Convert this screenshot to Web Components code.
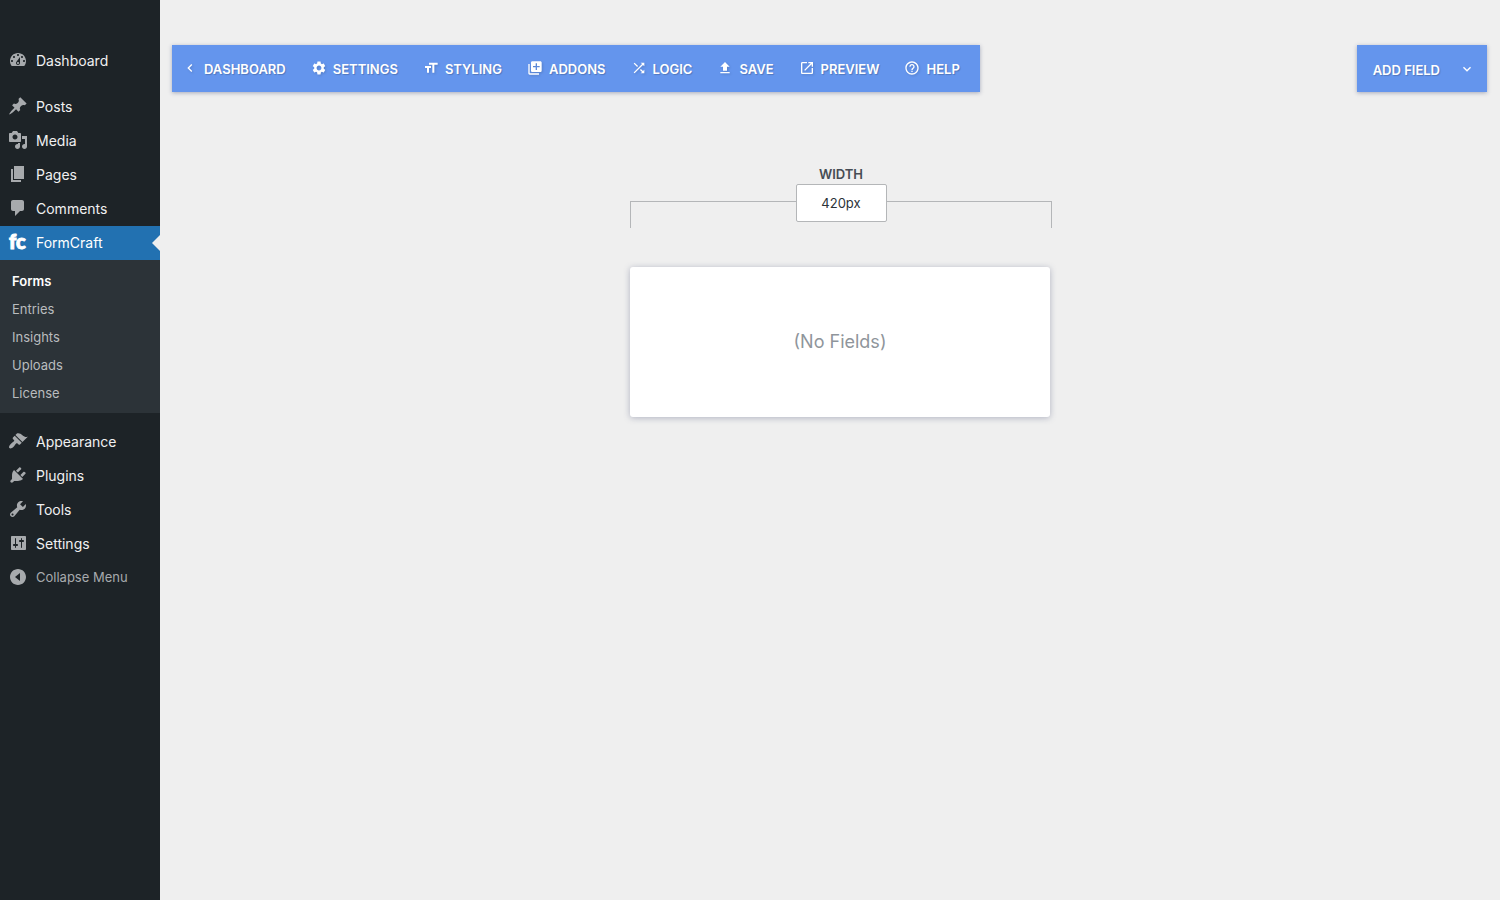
<!DOCTYPE html>
<html lang="en">
<head>
<meta charset="utf-8">
<meta name="viewport" content="width=device-width, initial-scale=1">
<title>FormCraft</title>
<style>
  html, body { height: 100%; }
  body {
    margin: 0;
    background: #efefef;
    font-family: Inter, "Liberation Sans", sans-serif;
    font-size: 14px;
  }
</style>
</head>
<body>
<builder-app>
  <admin-menu slot="menu">
    <menu-item icon="dashboard">Dashboard</menu-item>
    <menu-item icon="post" spaced>Posts</menu-item>
    <menu-item icon="media">Media</menu-item>
    <menu-item icon="page">Pages</menu-item>
    <menu-item icon="comments">Comments</menu-item>
    <menu-item icon="formcraft" current>FormCraft</menu-item>
    <sub-menu>
      <sub-item current>Forms</sub-item>
      <sub-item>Entries</sub-item>
      <sub-item>Insights</sub-item>
      <sub-item>Uploads</sub-item>
      <sub-item>License</sub-item>
    </sub-menu>
    <menu-item icon="appearance" spaced>Appearance</menu-item>
    <menu-item icon="plugins">Plugins</menu-item>
    <menu-item icon="tools">Tools</menu-item>
    <menu-item icon="sliders">Settings</menu-item>
    <menu-item icon="collapse" muted>Collapse Menu</menu-item>
  </admin-menu>
  <form-toolbar slot="toolbar">
    <tool-button icon="chevron-left" href="#dashboard">DASHBOARD</tool-button>
    <tool-button icon="settings">SETTINGS</tool-button>
    <tool-button icon="styling">STYLING</tool-button>
    <tool-button icon="addons">ADDONS</tool-button>
    <tool-button icon="logic">LOGIC</tool-button>
    <tool-button icon="save">SAVE</tool-button>
    <tool-button icon="preview" href="#preview">PREVIEW</tool-button>
    <tool-button icon="help">HELP</tool-button>
  </form-toolbar>
  <add-field slot="toolbar">ADD FIELD</add-field>
  <width-ruler value="420px">WIDTH</width-ruler>
  <form-card>(No Fields)</form-card>
</builder-app>

<script>
/* Admin icons are drawn on a 20 unit grid, toolbar icons on 24 */
const ICONS = {
  dashboard: [20, "M3.76 16h12.48c1.1-1.37 1.76-3.11 1.76-5 0-4.42-3.58-8-8-8s-8 3.58-8 8c0 1.89.66 3.63 1.76 5zM10 4c.55 0 1 .45 1 1s-.45 1-1 1-1-.45-1-1 .45-1 1-1zM6 6c.55 0 1 .45 1 1s-.45 1-1 1-1-.45-1-1 .45-1 1-1zm8 0c.55 0 1 .45 1 1s-.45 1-1 1-1-.45-1-1 .45-1 1-1zm-5.37 5.55L12 7v6c0 1.1-.9 2-2 2s-2-.9-2-2c0-.57.24-1.08.63-1.45zM4 10c.55 0 1 .45 1 1s-.45 1-1 1-1-.45-1-1 .45-1 1-1zm12 0c.55 0 1 .45 1 1s-.45 1-1 1-1-.45-1-1 .45-1 1-1zm-5 3c0-.55-.45-1-1-1s-1 .45-1 1 .45 1 1 1 1-.45 1-1z"],
  post: [20, "M10.44 3.02l1.82-1.82 6.36 6.35-1.83 1.82c-1.05-.68-2.48-.57-3.41.36l-.75.75c-.92.93-1.04 2.35-.35 3.41l-1.83 1.82-2.41-2.41-2.8 2.79c-.42.42-3.38 2.71-3.8 2.29s1.86-3.39 2.28-3.81l2.79-2.79L4.1 9.36l1.83-1.82c1.05.69 2.48.57 3.4-.36l.75-.75c.93-.92 1.05-2.35.36-3.41z"],
  media: [20, "M13 11V4c0-.55-.45-1-1-1h-1.67L9 1H5L3.67 3H2c-.55 0-1 .45-1 1v7c0 .55.45 1 1 1h10c.55 0 1-.45 1-1zM7 4.5c1.38 0 2.5 1.12 2.5 2.5S8.38 9.5 7 9.5 4.5 8.38 4.5 7 5.62 4.5 7 4.5zM14 6h5v10.5c0 1.38-1.12 2.5-2.5 2.5S14 17.88 14 16.5s1.12-2.5 2.5-2.5c.17 0 .34.02.5.05V9h-3V6zm-4 8.05V13h2v3.5c0 1.38-1.12 2.5-2.5 2.5S7 17.88 7 16.5 8.12 14 9.5 14c.17 0 .34.02.5.05z"],
  page: [20, "M6 15V2h10v13H6zm-1 1h8v2H3V5h2v11z"],
  comments: [20, "M5 2h9c1.1 0 2 .9 2 2v7c0 1.1-.9 2-2 2h-2l-5 5v-5H5c-1.1 0-2-.9-2-2V4c0-1.1.9-2 2-2z"],
  appearance: [20, "M14.48 11.06L7.41 3.99l1.5-1.5c.5-.56 2.3-.47 3.51.32 1.21.8 1.43 1.28 2.91 2.1 1.18.64 2.45 1.26 4.45.85zm-.71.71L6.7 4.7 4.93 6.47c-.39.39-.39 1.02 0 1.41l1.06 1.06c.39.39.39 1.03 0 1.42-.6.6-1.43 1.11-2.21 1.69-.35.26-.7.53-1.01.84C1.43 14.23.4 16.08 1.4 17.07c.99 1 2.84-.03 4.18-1.36.31-.31.58-.66.85-1.02.57-.78 1.08-1.61 1.69-2.21.39-.39 1.02-.39 1.41 0l1.06 1.06c.39.39 1.02.39 1.41 0z"],
  plugins: [20, "M13.11 4.36L9.87 7.6 8 5.73l3.24-3.24c.35-.34 1.05-.2 1.56.32.52.51.66 1.21.31 1.55zm-8 1.77l.91-1.12 9.01 9.01-1.19.84c-.71.71-2.63 1.16-3.82 1.16H6.14L4.9 17.26c-.59.59-1.54.59-2.12 0-.59-.58-.59-1.53 0-2.12l1.24-1.24v-3.88c0-1.13.4-3.19 1.09-3.89zm7.26 3.97l3.24-3.24c.34-.35 1.04-.21 1.55.31.52.51.66 1.21.31 1.55l-3.24 3.25z"],
  tools: [20, "M16.68 9.77c-1.34 1.34-3.3 1.67-4.95.99l-5.41 6.52c-.99.99-2.59.99-3.58 0s-.99-2.59 0-3.57l6.52-5.42c-.68-1.65-.35-3.61.99-4.95 1.28-1.28 3.12-1.62 4.72-1.06l-2.89 2.89 2.82 2.82 2.86-2.87c.53 1.58.18 3.39-1.08 4.65zM3.81 16.21c.4.39 1.04.39 1.43 0 .4-.4.4-1.04 0-1.43-.39-.4-1.03-.4-1.43 0-.39.39-.39 1.03 0 1.43z"],
  sliders: [20, "M18 16V4c0-.55-.45-1-1-1H4c-.55 0-1 .45-1 1v12c0 .55.45 1 1 1h13c.55 0 1-.45 1-1zM8 11h1c.55 0 1 .45 1 1s-.45 1-1 1H8v1.5c0 .28-.22.5-.5.5s-.5-.22-.5-.5V13H6c-.55 0-1-.45-1-1s.45-1 1-1h1V5.5c0-.28.22-.5.5-.5s.5.22.5.5V11zm5-2h-1c-.55 0-1-.45-1-1s.45-1 1-1h1V5.5c0-.28.22-.5.5-.5s.5.22.5.5V7h1c.55 0 1 .45 1 1s-.45 1-1 1h-1v5.5c0 .28-.22.5-.5.5s-.5-.22-.5-.5V9z"],
  collapse: [20, "M10 2c4.42 0 8 3.58 8 8s-3.58 8-8 8-8-3.58-8-8 3.58-8 8-8zm2 12V6l-5 4z"],
  "chevron-left": [24, "M15.41 7.41L14 6l-6 6 6 6 1.41-1.41L10.83 12z"],
  "chevron-down": [24, "M7.41 8.59L12 13.17l4.59-4.58L18 10l-6 6-6-6z"],
  settings: [24, "M19.14 12.94c.04-.3.06-.61.06-.94 0-.32-.02-.64-.07-.94l2.03-1.58c.18-.14.23-.41.12-.61l-1.92-3.32c-.12-.22-.37-.29-.59-.22l-2.39.96c-.5-.38-1.03-.7-1.62-.94l-.36-2.54c-.04-.24-.24-.41-.48-.41h-3.84c-.24 0-.43.17-.47.41l-.36 2.54c-.59.24-1.13.57-1.62.94l-2.39-.96c-.22-.08-.47 0-.59.22L2.74 8.87c-.12.21-.08.47.12.61l2.03 1.58c-.05.3-.09.63-.09.94s.02.64.07.94l-2.03 1.58c-.18.14-.23.41-.12.61l1.92 3.32c.12.22.37.29.59.22l2.39-.96c.5.38 1.03.7 1.62.94l.36 2.54c.05.24.24.41.48.41h3.84c.24 0 .44-.17.47-.41l.36-2.54c.59-.24 1.13-.56 1.62-.94l2.39.96c.22.08.47 0 .59-.22l1.92-3.32c.12-.22.07-.47-.12-.61l-2.01-1.58zM12 15.6c-1.98 0-3.6-1.62-3.6-3.6s1.62-3.6 3.6-3.6 3.6 1.62 3.6 3.6-1.62 3.6-3.6 3.6z"],
  styling: [24, "M9 4v3h5v12h3V7h5V4H9zm-6 8h3v7h3v-7h3V9H3v3z"],
  addons: [24, "M4 6H2v14c0 1.1.9 2 2 2h14v-2H4V6zm16-4H8c-1.1 0-2 .9-2 2v12c0 1.1.9 2 2 2h12c1.1 0 2-.9 2-2V4c0-1.1-.9-2-2-2zm-1 9h-4v4h-2v-4H9V9h4V5h2v4h4v2z"],
  logic: [24, "M10.59 9.17L5.41 4 4 5.41l5.17 5.17 1.42-1.41zM14.5 4l2.04 2.04L4 18.59 5.41 20 17.96 7.46 20 9.5V4h-5.5zm.33 9.41l-1.41 1.41 3.13 3.13L14.5 20H20v-5.5l-2.04 2.04-3.13-3.13z"],
  save: [24, "M9 16h6v-6h4l-7-7-7 7h4zm-4 2h14v2H5z"],
  preview: [24, "M19 19H5V5h7V3H5c-1.11 0-2 .9-2 2v14c0 1.1.89 2 2 2h14c1.1 0 2-.9 2-2v-7h-2v7zM14 3v2h3.59l-9.83 9.83 1.41 1.41L19 6.41V10h2V3h-7z"],
  help: [24, "M11 18h2v-2h-2v2zm1-16C6.48 2 2 6.48 2 12s4.48 10 10 10 10-4.48 10-10S17.52 2 12 2zm0 18c-4.41 0-8-3.59-8-8s3.59-8 8-8 8 3.59 8 8-3.59 8-8 8zm0-14c-2.21 0-4 1.79-4 4h2c0-1.1.9-2 2-2s2 .9 2 2c0 2-3 1.75-3 5h2c0-2.25 3-2.5 3-5 0-2.21-1.79-4-4-4z"],
};

function iconSvg(name) {
  if (name === "formcraft") {
    return '<svg viewBox="0 0 20 20" aria-hidden="true"><text x="1" y="17" font-family="Lato, sans-serif" font-weight="900" font-size="20" fill="currentColor" stroke="currentColor">fc</text></svg>';
  }
  const [size, path] = ICONS[name];
  return `<svg viewBox="0 0 ${size} ${size}" fill="currentColor" fill-rule="evenodd" aria-hidden="true"><path d="${path}"/></svg>`;
}

/* Base class: subclasses return their shadow markup from template() */
class BaseElement extends HTMLElement {
  constructor() {
    super();
    this.attachShadow({ mode: "open" });
  }

  connectedCallback() {
    this.shadowRoot.innerHTML = this.template();
  }
}

class BuilderApp extends BaseElement {
  template() {
    return `
      <style>
        :host { display: flex; min-height: 100%; }
        main { flex: 1; min-width: 0; }
        header {
          display: flex;
          justify-content: space-between;
          padding: 45px 13px 0 12px;
        }
        .canvas {
          display: flex;
          flex-direction: column;
          align-items: center;
          padding: 72px 0 40px 20px;
        }
      </style>
      <slot name="menu"></slot>
      <main>
        <header><slot name="toolbar"></slot></header>
        <section class="canvas"><slot></slot></section>
      </main>
    `;
  }
}

/* ── Admin menu ──────────────────────────────────────── */
class AdminMenu extends BaseElement {
  template() {
    return `
      <style>
        :host {
          display: block;
          flex: 0 0 160px;
          background: #1d2327;
        }
        nav { padding-top: 44px; }
      </style>
      <nav aria-label="Main menu"><slot></slot></nav>
    `;
  }
}

class MenuItem extends BaseElement {
  template() {
    const name = this.getAttribute("icon");
    const body = `${iconSvg(name)}<slot></slot>`;
    return `
      <style>
        :host { display: block; color: #f0f0f1; }
        :host([spaced]) { margin-top: 12px; }
        :host([current]) { background: #2271b1; color: #fff; }
        a, button {
          display: flex;
          align-items: center;
          gap: 8px;
          position: relative;
          box-sizing: border-box;
          width: 100%;
          height: 34px;
          padding: 0 8px 2px;
          border: 0;
          background: none;
          color: inherit;
          font: inherit;
          text-decoration: none;
          cursor: pointer;
        }
        :host([muted]) { color: #a7aaad; font-size: 13px; }
        svg { flex: none; width: 20px; height: 20px; color: #a7aaad; overflow: visible; }
        :host([current]) svg { color: #fff; }
        :host([current]) a::after {
          content: "";
          position: absolute;
          right: 0;
          top: 9px;
          border: 8px solid transparent;
          border-left-width: 0;
          border-right-color: #efefef;
        }
      </style>
      ${this.hasAttribute("muted")
        ? `<button type="button">${body}</button>`
        : `<a href="#${name}">${body}</a>`}
    `;
  }
}

class SubMenu extends BaseElement {
  template() {
    return `
      <style>
        :host { display: block; background: #2c3338; padding: 7px 0 6px; }
      </style>
      <slot></slot>
    `;
  }
}

class SubItem extends BaseElement {
  template() {
    return `
      <style>
        :host { display: block; font-size: 13px; color: #b9bcbe; }
        :host([current]) { color: #fff; font-weight: 600; }
        a {
          display: block;
          padding: 0 12px;
          line-height: 28px;
          color: inherit;
          text-decoration: none;
        }
      </style>
      <a href="#"><slot></slot></a>
    `;
  }
}

/* ── Toolbar ─────────────────────────────────────────── */
class FormToolbar extends BaseElement {
  template() {
    return `
      <style>
        :host {
          display: flex;
          gap: 25px;
          height: 47px;
          padding: 0 20px 0 10px;
          background: #6495ed;
          box-shadow: 0 1px 4px rgba(60, 70, 110, 0.4);
        }
      </style>
      <slot></slot>
    `;
  }
}

class ToolButton extends BaseElement {
  template() {
    const href = this.getAttribute("href");
    const body = `${iconSvg(this.getAttribute("icon"))}<span><slot></slot></span>`;
    return `
      <style>
        :host { display: block; }
        a, button {
          display: flex;
          align-items: center;
          gap: 6px;
          height: 100%;
          padding: 0;
          border: 0;
          background: none;
          color: #fff;
          font: 600 13px/20px Inter, "Liberation Sans", sans-serif;
          text-shadow: 1px 1px 1px rgba(0, 0, 0, 0.2);
          text-decoration: none;
          white-space: nowrap;
          cursor: pointer;
        }
        svg {
          width: 16px;
          height: 16px;
          margin-bottom: 2px;
          filter: drop-shadow(1px 1px 1px rgba(0, 0, 0, 0.15));
        }
      </style>
      ${href ? `<a href="${href}">${body}</a>` : `<button type="button">${body}</button>`}
    `;
  }
}

class AddField extends BaseElement {
  template() {
    return `
      <style>
        :host { display: block; }
        button {
          display: flex;
          align-items: center;
          gap: 19px;
          height: 47px;
          padding: 2px 12px 0 16px;
          border: 0;
          background: #6495ed;
          box-shadow: 0 1px 4px rgba(60, 70, 110, 0.4);
          color: #fff;
          font: 600 13px/20px Inter, "Liberation Sans", sans-serif;
          text-shadow: 1px 1px 1px rgba(0, 0, 0, 0.2);
          white-space: nowrap;
          cursor: pointer;
        }
        svg { width: 16px; height: 16px; margin-bottom: 2px; }
      </style>
      <button type="button"><slot></slot>${iconSvg("chevron-down")}</button>
    `;
  }
}

/* ── Canvas ──────────────────────────────────────────── */
class WidthRuler extends BaseElement {
  template() {
    return `
      <style>
        :host { display: block; width: 100%; max-width: 422px; padding-left: 2px; }
        label {
          display: block;
          text-align: center;
          color: #464c54;
          font-size: 13px;
          font-weight: 600;
          line-height: 20px;
        }
        .row { display: flex; height: 44px; }
        .line {
          flex: 1;
          height: 26px;
          margin-top: 17px;
          border-top: 1px solid #b4b6b8;
        }
        .left { border-left: 1px solid #b4b6b8; }
        .right { border-right: 1px solid #b4b6b8; }
        input {
          box-sizing: border-box;
          width: 91px;
          height: 38px;
          padding: 0;
          border: 1px solid #b4b6b8;
          border-radius: 2px;
          background: #fff;
          color: #2c3338;
          font: inherit;
          font-size: 13px;
          text-align: center;
        }
      </style>
      <label for="width"><slot></slot></label>
      <div class="row">
        <div class="line left"></div>
        <input id="width" type="text" value="${this.getAttribute("value")}">
        <div class="line right"></div>
      </div>
    `;
  }
}

class FormCard extends BaseElement {
  template() {
    return `
      <style>
        :host {
          display: block;
          width: 100%;
          max-width: 420px;
          margin-top: 39px;
          padding: 60px 0;
          border-radius: 3px;
          background: #fff;
          box-shadow: 0 1px 6px rgba(60, 70, 110, 0.35);
          box-sizing: border-box;
          color: #8f959b;
          font-size: 18px;
          line-height: 30px;
          text-align: center;
        }
      </style>
      <slot></slot>
    `;
  }
}

customElements.define("builder-app", BuilderApp);
customElements.define("admin-menu", AdminMenu);
customElements.define("menu-item", MenuItem);
customElements.define("sub-menu", SubMenu);
customElements.define("sub-item", SubItem);
customElements.define("form-toolbar", FormToolbar);
customElements.define("tool-button", ToolButton);
customElements.define("add-field", AddField);
customElements.define("width-ruler", WidthRuler);
customElements.define("form-card", FormCard);
</script>
</body>
</html>
